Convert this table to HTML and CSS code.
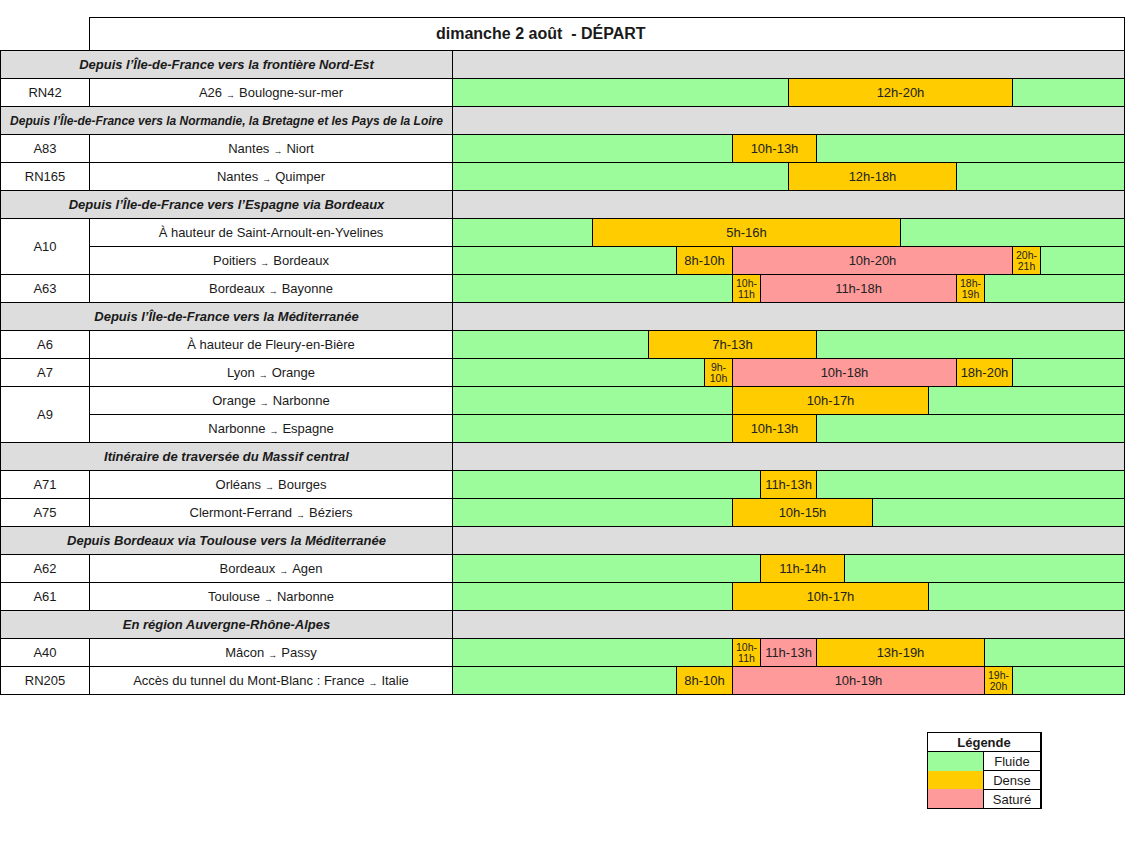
FILE: index.html
```html
<!DOCTYPE html>
<html lang="fr">
<head>
<meta charset="utf-8">
<title>dimanche 2 août - DÉPART</title>
<link rel="stylesheet" href="styles.css">
</head>
<body>
<div class="page">
  <div class="title"><span class="title-text">dimanche 2 août &nbsp;- DÉPART</span></div>
  <div class="grid">
    <div class="sec">Depuis l’Île-de-France vers la frontière Nord-Est</div><div class="tl-sec"></div>
    <div class="c1">RN42</div><div class="c2">A26 <span class="ar">→</span> Boulogne-sur-mer</div>
    <div class="tl"><div class="g" style="width:335px"></div><div class="o" style="width:223px">12h-20h</div><div class="g" style="width:111px"></div></div>

    <div class="sec sec-sm">Depuis l’Île-de-France vers la Normandie, la Bretagne et les Pays de la Loire</div><div class="tl-sec"></div>
    <div class="c1">A83</div><div class="c2">Nantes<span class="ar">→</span> Niort</div>
    <div class="tl"><div class="g" style="width:279px"></div><div class="o" style="width:83px">10h-13h</div><div class="g" style="width:307px"></div></div>
    <div class="c1">RN165</div><div class="c2">Nantes <span class="ar">→</span> Quimper</div>
    <div class="tl"><div class="g" style="width:335px"></div><div class="o" style="width:167px">12h-18h</div><div class="g" style="width:167px"></div></div>

    <div class="sec">Depuis l’Île-de-France vers l’Espagne via Bordeaux</div><div class="tl-sec"></div>
    <div class="c1 span2">A10</div><div class="c2">À hauteur de Saint-Arnoult-en-Yvelines</div>
    <div class="tl"><div class="g" style="width:139px"></div><div class="o" style="width:307px">5h-16h</div><div class="g" style="width:223px"></div></div>
    <div class="c2">Poitiers <span class="ar">→</span>Bordeaux</div>
    <div class="tl"><div class="g" style="width:223px"></div><div class="o" style="width:55px">8h-10h</div><div class="p" style="width:279px">10h-20h</div><div class="o sm" style="width:27px">20h-<br>21h</div><div class="g" style="width:83px"></div></div>
    <div class="c1">A63</div><div class="c2">Bordeaux <span class="ar">→</span> Bayonne</div>
    <div class="tl"><div class="g" style="width:279px"></div><div class="o sm" style="width:27px">10h-<br>11h</div><div class="p" style="width:195px">11h-18h</div><div class="o sm" style="width:27px">18h-<br>19h</div><div class="g" style="width:139px"></div></div>

    <div class="sec">Depuis l’Île-de-France vers la Méditerranée</div><div class="tl-sec"></div>
    <div class="c1">A6</div><div class="c2">À hauteur de Fleury-en-Bière</div>
    <div class="tl"><div class="g" style="width:195px"></div><div class="o" style="width:167px">7h-13h</div><div class="g" style="width:307px"></div></div>
    <div class="c1">A7</div><div class="c2">Lyon <span class="ar">→</span> Orange</div>
    <div class="tl"><div class="g" style="width:251px"></div><div class="o sm" style="width:27px">9h-<br>10h</div><div class="p" style="width:223px">10h-18h</div><div class="o" style="width:55px">18h-20h</div><div class="g" style="width:111px"></div></div>
    <div class="c1 span2">A9</div><div class="c2">Orange <span class="ar">→</span> Narbonne</div>
    <div class="tl"><div class="g" style="width:279px"></div><div class="o" style="width:195px">10h-17h</div><div class="g" style="width:195px"></div></div>
    <div class="c2">Narbonne <span class="ar">→</span> Espagne</div>
    <div class="tl"><div class="g" style="width:279px"></div><div class="o" style="width:83px">10h-13h</div><div class="g" style="width:307px"></div></div>

    <div class="sec">Itinéraire de traversée du Massif central</div><div class="tl-sec"></div>
    <div class="c1">A71</div><div class="c2">Orléans <span class="ar">→</span> Bourges</div>
    <div class="tl"><div class="g" style="width:307px"></div><div class="o" style="width:55px">11h-13h</div><div class="g" style="width:307px"></div></div>
    <div class="c1">A75</div><div class="c2">Clermont-Ferrand <span class="ar">→</span> Béziers</div>
    <div class="tl"><div class="g" style="width:279px"></div><div class="o" style="width:139px">10h-15h</div><div class="g" style="width:251px"></div></div>

    <div class="sec">Depuis Bordeaux via Toulouse vers la Méditerranée</div><div class="tl-sec"></div>
    <div class="c1">A62</div><div class="c2">Bordeaux <span class="ar">→</span> Agen</div>
    <div class="tl"><div class="g" style="width:307px"></div><div class="o" style="width:83px">11h-14h</div><div class="g" style="width:279px"></div></div>
    <div class="c1">A61</div><div class="c2">Toulouse<span class="ar">→</span> Narbonne</div>
    <div class="tl"><div class="g" style="width:279px"></div><div class="o" style="width:195px">10h-17h</div><div class="g" style="width:195px"></div></div>

    <div class="sec">En région Auvergne-Rhône-Alpes</div><div class="tl-sec"></div>
    <div class="c1">A40</div><div class="c2">Mâcon <span class="ar">→</span> Passy</div>
    <div class="tl"><div class="g" style="width:279px"></div><div class="o sm" style="width:27px">10h-<br>11h</div><div class="p" style="width:55px">11h-13h</div><div class="o" style="width:167px">13h-19h</div><div class="g" style="width:139px"></div></div>
    <div class="c1">RN205</div><div class="c2">Accès du tunnel du Mont-Blanc : France <span class="ar">→</span> Italie</div>
    <div class="tl"><div class="g" style="width:223px"></div><div class="o" style="width:55px">8h-10h</div><div class="p" style="width:251px">10h-19h</div><div class="o sm" style="width:27px">19h-<br>20h</div><div class="g" style="width:111px"></div></div>
  </div>

  <div class="legend">
    <div class="lg-title">Légende</div>
    <div class="lg-colors"><div class="lg-sw g"></div><div class="lg-sw o"></div><div class="lg-sw p"></div></div>
    <div class="lg-label">Fluide</div>
    <div class="lg-label">Dense</div>
    <div class="lg-label">Saturé</div>
  </div>
</div>
</body>
</html>
```

FILE: styles.css
```css
html, body {
  margin: 0;
  padding: 0;
  background: #ffffff;
}
body {
  font-family: "Liberation Sans", Arial, sans-serif;
  color: #1a1a1a;
}
.page {
  padding-top: 17px;
}
.title {
  margin-left: 89px;
  width: 1034px;
  height: 32px;
  border: 1px solid #000;
  border-bottom: none;
  display: flex;
  align-items: center;
}
.title-text {
  margin-left: 346px;
  font-size: 16px;
  font-weight: bold;
  white-space: pre;
}
.grid {
  display: grid;
  grid-template-columns: 88px 362px 671px;
  grid-auto-rows: 27px;
  gap: 1px;
  padding: 1px;
  background: #000;
  width: 1123px;
}
.sec {
  grid-column: span 2;
  background: #dddddd;
  font-weight: bold;
  font-style: italic;
  font-size: 13px;
  display: flex;
  align-items: center;
  justify-content: center;
}
.sec-sm {
  font-size: 12px;
}
.tl-sec {
  background: #dddddd;
}
.c1, .c2 {
  background: #fff;
  font-size: 13px;
  display: flex;
  align-items: center;
  justify-content: center;
  white-space: nowrap;
}
.span2 {
  grid-row: span 2;
}
.ar {
  font-size: 9px;
  font-weight: bold;
  margin: 0 4px;
  position: relative;
  top: 2px;
}
.tl {
  display: flex;
  gap: 1px;
}
.tl > div {
  flex: none;
  display: flex;
  align-items: center;
  justify-content: center;
  font-size: 13px;
  color: #222;
  text-align: center;
}
.g { background: #9cfc9c; }
.o { background: #ffcc00; }
.p { background: #ff9a9a; }
.tl > .sm {
  font-size: 10.5px;
  line-height: 11px;
}
.legend {
  margin: 37px 0 0 927px;
  display: grid;
  grid-template-columns: 55px 56px;
  grid-template-rows: 18px 18px 18px 18px;
  gap: 1px;
  padding: 1px;
  background: #000;
  width: 113px;
}
.lg-title {
  grid-column: span 2;
  background: #fff;
  font-weight: bold;
  font-size: 13px;
  display: flex;
  align-items: center;
  justify-content: center;
}
.lg-colors {
  grid-row: 2 / span 3;
  grid-column: 1;
  display: flex;
  flex-direction: column;
}
.lg-sw {
  flex: 1;
}
.lg-label {
  grid-column: 2;
  background: #fff;
  font-size: 13px;
  display: flex;
  align-items: center;
  justify-content: center;
}
```
